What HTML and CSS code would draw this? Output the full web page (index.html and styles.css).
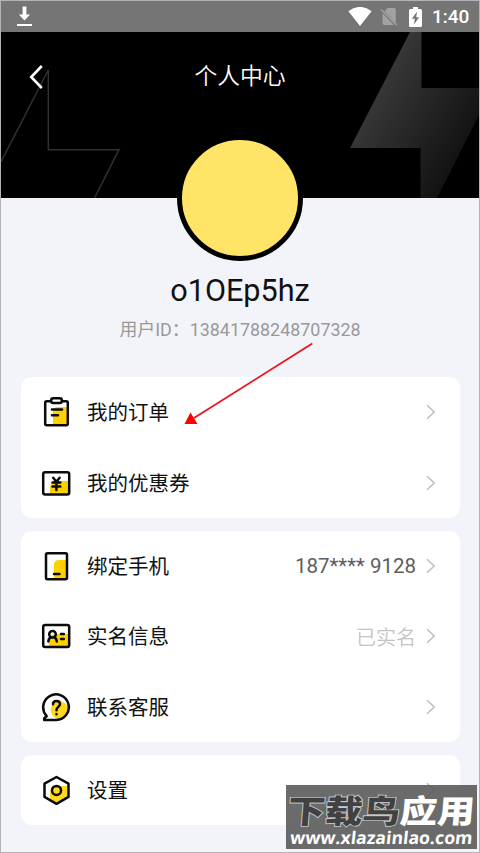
FILE: index.html
```html
<!DOCTYPE html>
<html lang="zh-CN">
<head>
<meta charset="utf-8">
<title>个人中心</title>
<link rel="stylesheet" href="styles.css">
</head>
<body>
<div class="screen">
  <div class="status">
    <svg class="download" width="17" height="22" viewBox="0 0 17 22"><path d="M6.600 .5h3.800v8h3.700l-5.600 6-5.600-6h3.700z" fill="#fff"/><path d="M1 18h15v2H1z" fill="#fff"/></svg>
    <svg class="wifi" width="24" height="20" viewBox="0 0 24 20"><path d="M.4 4.300Q12-4.500 23.600 4.300L12 19z" fill="#fff"/></svg>
    <svg class="sim" width="18" height="19" viewBox="0 0 18 19"><path d="M7.500 1H14q1.800 0 1.800 1.800v13.500L4.500 4.300zM2.500 6.200 14 18H4.200q-1.700 0-1.700-1.700z" fill="#a2a2a2"/><path d="M1 2.500 17 18.200" stroke="#a2a2a2" stroke-width="1.500"/></svg>
    <svg class="battery" width="13" height="20" viewBox="0 0 13 20"><path d="M4 0h5v2h2.500q1.500 0 1.500 1.500v15q0 1.500-1.500 1.500h-10Q0 20 0 18.500v-15Q0 2 1.500 2H4z" fill="#fff"/><path d="M8 4.500 3 11.800h2.800L5 17.500l5-7.300H7.200z" fill="#757575"/></svg>
    <span class="clock">1:40</span>
  </div>
  <header class="hero">
    <svg class="pattern" width="478" height="166" viewBox="1 32 478 166">
      <defs><linearGradient id="shade" gradientUnits="userSpaceOnUse" x1="365" y1="90" x2="465" y2="145"><stop offset="0" stop-color="#3b3b3b"/><stop offset="1" stop-color="#131313"/></linearGradient></defs>
      <path d="M410 32h11.500v56H479v27l-42 83h-16.500v-50H350z" fill="url(#shade)"/>
      <path d="M1 162 48.300 70v79.700H119L94.500 198" fill="none" stroke="#303030" stroke-width="1.500"/>
    </svg>
    <svg class="back" width="16" height="26" viewBox="0 0 16 26"><path d="M13.800 2 3.200 13l10.600 11" fill="none" stroke="#fff" stroke-width="2.600"/></svg>
    <h1 class="title">个人中心</h1>
  </header>
  <section class="profile">
    <div class="avatar"></div>
    <div class="name">o1OEp5hz</div>
    <div class="uid">用户ID：13841788248707328</div>
  </section>
  <main class="groups">
    <div class="card">
      <div class="row">
        <svg class="icon" width="30" height="30" viewBox="0 0 30 30"><path d="M12 28V15q0-5 5-5h9v18z" fill="#ffd000"/><rect x="4.200" y="4.200" width="22.600" height="24" rx="1.500" class="ink"/><rect x="10.200" y="1.300" width="10.600" height="4.800" rx="2" class="ink fill-white"/><path d="M11 12.500h10M11 18.300h6" class="ink"/></svg>
        <span class="label">我的订单</span>
        <svg class="chevron" width="10" height="16" viewBox="0 0 10 16"><path d="M1 1.300 8.200 8 1 14.700"/></svg>
      </div>
      <div class="row">
        <svg class="icon" width="30" height="30" viewBox="0 0 30 30"><path d="M9 26v-5q0-8 8-8h10v13z" fill="#ffd000"/><rect x="2.200" y="4.300" width="26" height="22.200" rx="2" class="ink"/><path d="M12.200 9.700l3.200 4 3.200-4M11.500 14.600h7.800M11.500 18.600h7.800M15.400 14v8" class="ink"/></svg>
        <span class="label">我的优惠券</span>
        <svg class="chevron" width="10" height="16" viewBox="0 0 10 16"><path d="M1 1.300 8.200 8 1 14.700"/></svg>
      </div>
    </div>
    <div class="card">
      <div class="row">
        <svg class="icon" width="30" height="30" viewBox="0 0 30 30"><path d="M13 28V14q0-5 5-5h8v19z" fill="#ffd000"/><rect x="5" y="2.200" width="21" height="26" rx="1.500" class="ink"/><path d="M13 23h5.500" class="ink"/></svg>
        <span class="label">绑定手机</span><span class="value">187**** 9128</span>
        <svg class="chevron" width="10" height="16" viewBox="0 0 10 16"><path d="M1 1.300 8.200 8 1 14.700"/></svg>
      </div>
      <div class="row">
        <svg class="icon" width="30" height="30" viewBox="0 0 30 30"><path d="M8 26v-5q0-8 8-8h11v13z" fill="#ffd000"/><rect x="2.200" y="4" width="26" height="22" rx="2" class="ink"/><circle cx="11.500" cy="13.300" r="3.300" class="ink"/><path d="M7.300 20.500q.4-3.500 2.800-4.200M15.800 20.500q-.4-3.500-2.800-4.200M20 13h2.800M20 18h2.800" class="ink"/></svg>
        <span class="label">实名信息</span><span class="value muted">已实名</span>
        <svg class="chevron" width="10" height="16" viewBox="0 0 10 16"><path d="M1 1.300 8.200 8 1 14.700"/></svg>
      </div>
      <div class="row">
        <svg class="icon" width="30" height="30" viewBox="0 0 30 30"><circle cx="18.500" cy="18" r="8.800" fill="#ffd91c"/><path d="M3.200 28V26.500L5.700 24A12.800 12.800 0 1 1 15.300 28z" class="ink"/><path d="M12 12.200Q12 8.900 15.500 8.900T19 12q0 1.800-2 3.200-1.500 1.100-1.500 3M15.500 22v.3" class="ink"/></svg>
        <span class="label">联系客服</span>
        <svg class="chevron" width="10" height="16" viewBox="0 0 10 16"><path d="M1 1.300 8.200 8 1 14.700"/></svg>
      </div>
    </div>
    <div class="card">
      <div class="row">
        <svg class="icon" width="30" height="30" viewBox="0 0 30 30"><path d="M9 24v-6a7 7 0 0 1 7-7h11v11l-11.500 6z" fill="#ffd91c"/><path d="M15.500 2 27.500 8.700v13.200l-12 6.900-12-6.900V8.700z" class="ink"/><circle cx="15.500" cy="15.400" r="4.500" class="ink"/></svg>
        <span class="label">设置</span>
        <svg class="chevron" width="10" height="16" viewBox="0 0 10 16"><path d="M1 1.300 8.200 8 1 14.700"/></svg>
      </div>
    </div>
  </main>
  <svg class="arrow" width="130" height="86" viewBox="183 341 130 86"><path d="M312.300 343.500 194 418" stroke="#e8141c" stroke-width="1.800"/><path d="M184.500 424 190.500 412.500 197.500 424z" fill="#f00"/></svg>
  <div class="watermark">
    <div class="brand"><span class="dark">下载鸟</span><span>应用</span></div>
    <div class="site">www.xlazainlao.com</div>
  </div>
</div>
</body>
</html>
```
FILE: styles.css
```css
* { box-sizing: border-box; }
body { margin: 0; font-family: Roboto, "Noto Sans CJK SC", sans-serif; }
.screen { position: relative; width: 480px; height: 853px; overflow: hidden; border: 1px solid #b4b4b6; background: #f3f4f9; }
.status { display: flex; align-items: center; height: 31px; padding: 0 9px 0 15px; background: #757575; color: #fff; }
.download { margin: 0 auto 0 0; }
.wifi { margin-right: 8px; }
.sim { margin-right: 11px; }
.battery { margin-right: 10px; }
.clock { width: 38px; font-size: 19px; font-weight: 500; line-height: 31px; white-space: nowrap; }
.hero { position: relative; display: flex; justify-content: center; height: 166px; padding-top: 28px; background: #000; }
.pattern { position: absolute; inset: 0; }
.back { position: absolute; left: 27px; top: 32px; }
.title { position: relative; margin: 0; color: #fff; font-size: 22.800px; font-weight: 350; line-height: 34px; }
.profile { position: relative; display: flex; flex-direction: column; align-items: center; height: 179px; }
.avatar { flex: none; width: 126px; height: 126px; margin-top: -63px; border: 5px solid #000; border-radius: 50%; background: #ffe467; }
.name { margin-top: 10px; font-size: 30.600px; line-height: 40px; color: #111; }
.uid { margin-top: 6px; font-size: 17.900px; line-height: 26px; color: #999; white-space: nowrap; }
.groups { display: flex; flex-direction: column; gap: 13px; padding: 0 19px 0 20px; }
.card { border-radius: 11px; background: #fff; }
.row { display: flex; align-items: center; height: 70.400px; padding: 0 24px 0 20px; }
.icon { flex: none; margin-right: 16px; }
.ink { fill: none; stroke: #0b0b0b; stroke-width: 2.500; stroke-linecap: round; stroke-linejoin: round; }
.fill-white { fill: #fff; }
.label { flex: 1; padding-top: 2px; color: #111; font-size: 20.500px; line-height: 30px; }
.value { margin-right: 10px; color: #5d5d5d; font-size: 20.500px; }
.muted { color: #c4c4c4; font-size: 20px; font-weight: 350; }
.chevron { flex: none; }
.chevron path { fill: none; stroke: #bdbdbd; stroke-width: 1.500; }
.arrow { position: absolute; left: 182px; top: 340px; }
.watermark { position: absolute; left: 285px; top: 784px; width: 191px; height: 64px; background: rgba(86, 86, 86, .88); color: #fff; text-align: center; font-weight: 900; white-space: nowrap; }
.brand { margin-top: 5px; font-family: "Noto Sans CJK SC", sans-serif; font-size: 37.400px; line-height: 38px; height: 38px; transform: scaleY(.86) skewX(-4deg); }
.dark { color: #414141; -webkit-text-stroke: 2px #c8c8c8; paint-order: stroke fill; }
.site { font-family: "Open Sans", "Noto Sans", sans-serif; font-size: 17.500px; font-weight: 700; line-height: 18px; transform: scaleX(1.010) skewX(-6deg); }
```
